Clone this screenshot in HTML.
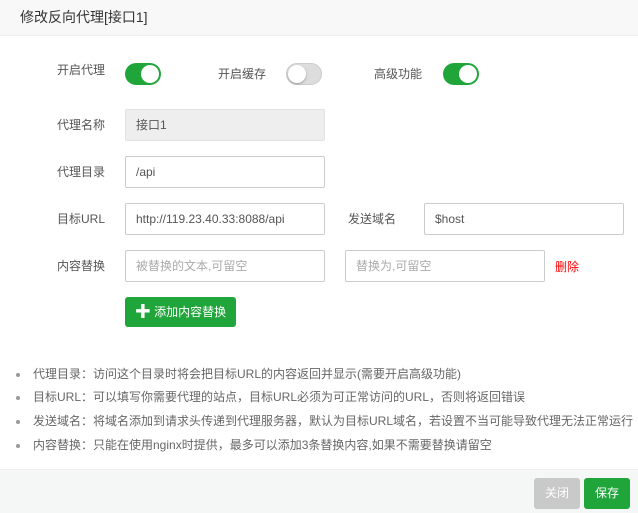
<!DOCTYPE html>
<html><head><meta charset="utf-8"><style>
*{box-sizing:border-box;margin:0;padding:0}
body{width:638px;height:513px;background:#fff;font-family:"Liberation Sans","Noto Sans CJK SC",sans-serif;font-size:12px;color:#333;position:relative;overflow:hidden}
.a{position:absolute}
.hd{left:0;top:0;width:638px;height:36px;background:#f8f8f8;border-bottom:1px solid #eee;font-size:14px;line-height:35px;padding-left:20px;color:#333}
.lb{line-height:14px;color:#555}
.in{height:32px;border:1px solid #ccc;border-radius:2px;line-height:30px;padding-left:10px;color:#555;width:200px}
.ph{color:#aaa}
.sw{width:36px;height:22px;border-radius:11px;background:#20a53a}
.sw::after{content:"";position:absolute;top:2px;right:2px;width:18px;height:18px;border-radius:50%;background:#fff}
.sw.off{background:#ddd;border:1px solid #ccc}
.sw.off::after{left:1px;right:auto;top:1px;box-shadow:0 1px 2px rgba(0,0,0,.3)}
ul{list-style:none}
li{position:absolute;left:16px;color:#666;line-height:16px}
li::before{content:"";position:absolute;left:0;top:7px;width:4px;height:4px;border-radius:50%;background:#999}
li span{padding-left:17px}
.ft{left:0;top:469px;width:638px;height:44px;background:#f5f6f6;border-top:1px solid #eee}
.bt{height:31px;line-height:31px;text-align:center;color:#fff;border-radius:3px;font-size:12px}
</style></head><body>
<div class="a hd">修改反向代理[接口1]</div>
<div class="a lb" style="left:57px;top:63px">开启代理</div>
<div class="a sw" style="left:125px;top:63px"></div>
<div class="a lb" style="left:218px;top:67px">开启缓存</div>
<div class="a sw off" style="left:286px;top:63px"></div>
<div class="a lb" style="left:374px;top:67px">高级功能</div>
<div class="a sw" style="left:443px;top:63px"></div>

<div class="a lb" style="left:57px;top:118px">代理名称</div>
<div class="a in" style="left:125px;top:109px;background:#eee;border-color:#e2e2e2">接口1</div>
<div class="a lb" style="left:57px;top:165px">代理目录</div>
<div class="a in" style="left:125px;top:156px">/api</div>
<div class="a lb" style="left:57px;top:212px">目标URL</div>
<div class="a in" style="left:125px;top:203px">http://119.23.40.33:8088/api</div>
<div class="a lb" style="left:348px;top:212px">发送域名</div>
<div class="a in" style="left:424px;top:203px">$host</div>
<div class="a lb" style="left:57px;top:259px">内容替换</div>
<div class="a in ph" style="left:125px;top:250px">被替换的文本,可留空</div>
<div class="a in ph" style="left:345px;top:250px">替换为,可留空</div>
<div class="a lb" style="left:555px;top:260px;color:#f00">删除</div>
<div class="a bt" style="left:125px;top:297px;width:111px;height:30px;line-height:30px;background:#20a53a;font-size:12px"><b style="font-size:16px;vertical-align:-1px">✚</b> 添加内容替换</div>

<ul>
<li style="top:366px"><span>代理目录：访问这个目录时将会把目标URL的内容返回并显示(需要开启高级功能)</span></li>
<li style="top:389px"><span>目标URL：可以填写你需要代理的站点，目标URL必须为可正常访问的URL，否则将返回错误</span></li>
<li style="top:413px"><span>发送域名：将域名添加到请求头传递到代理服务器，默认为目标URL域名，若设置不当可能导致代理无法正常运行</span></li>
<li style="top:437px"><span>内容替换：只能在使用nginx时提供，最多可以添加3条替换内容,如果不需要替换请留空</span></li>
</ul>
<div class="a ft"></div>
<div class="a bt" style="left:534px;top:478px;width:46px;background:#c9c9c9">关闭</div>
<div class="a bt" style="left:584px;top:478px;width:46px;background:#20a53a">保存</div>
</body></html>
